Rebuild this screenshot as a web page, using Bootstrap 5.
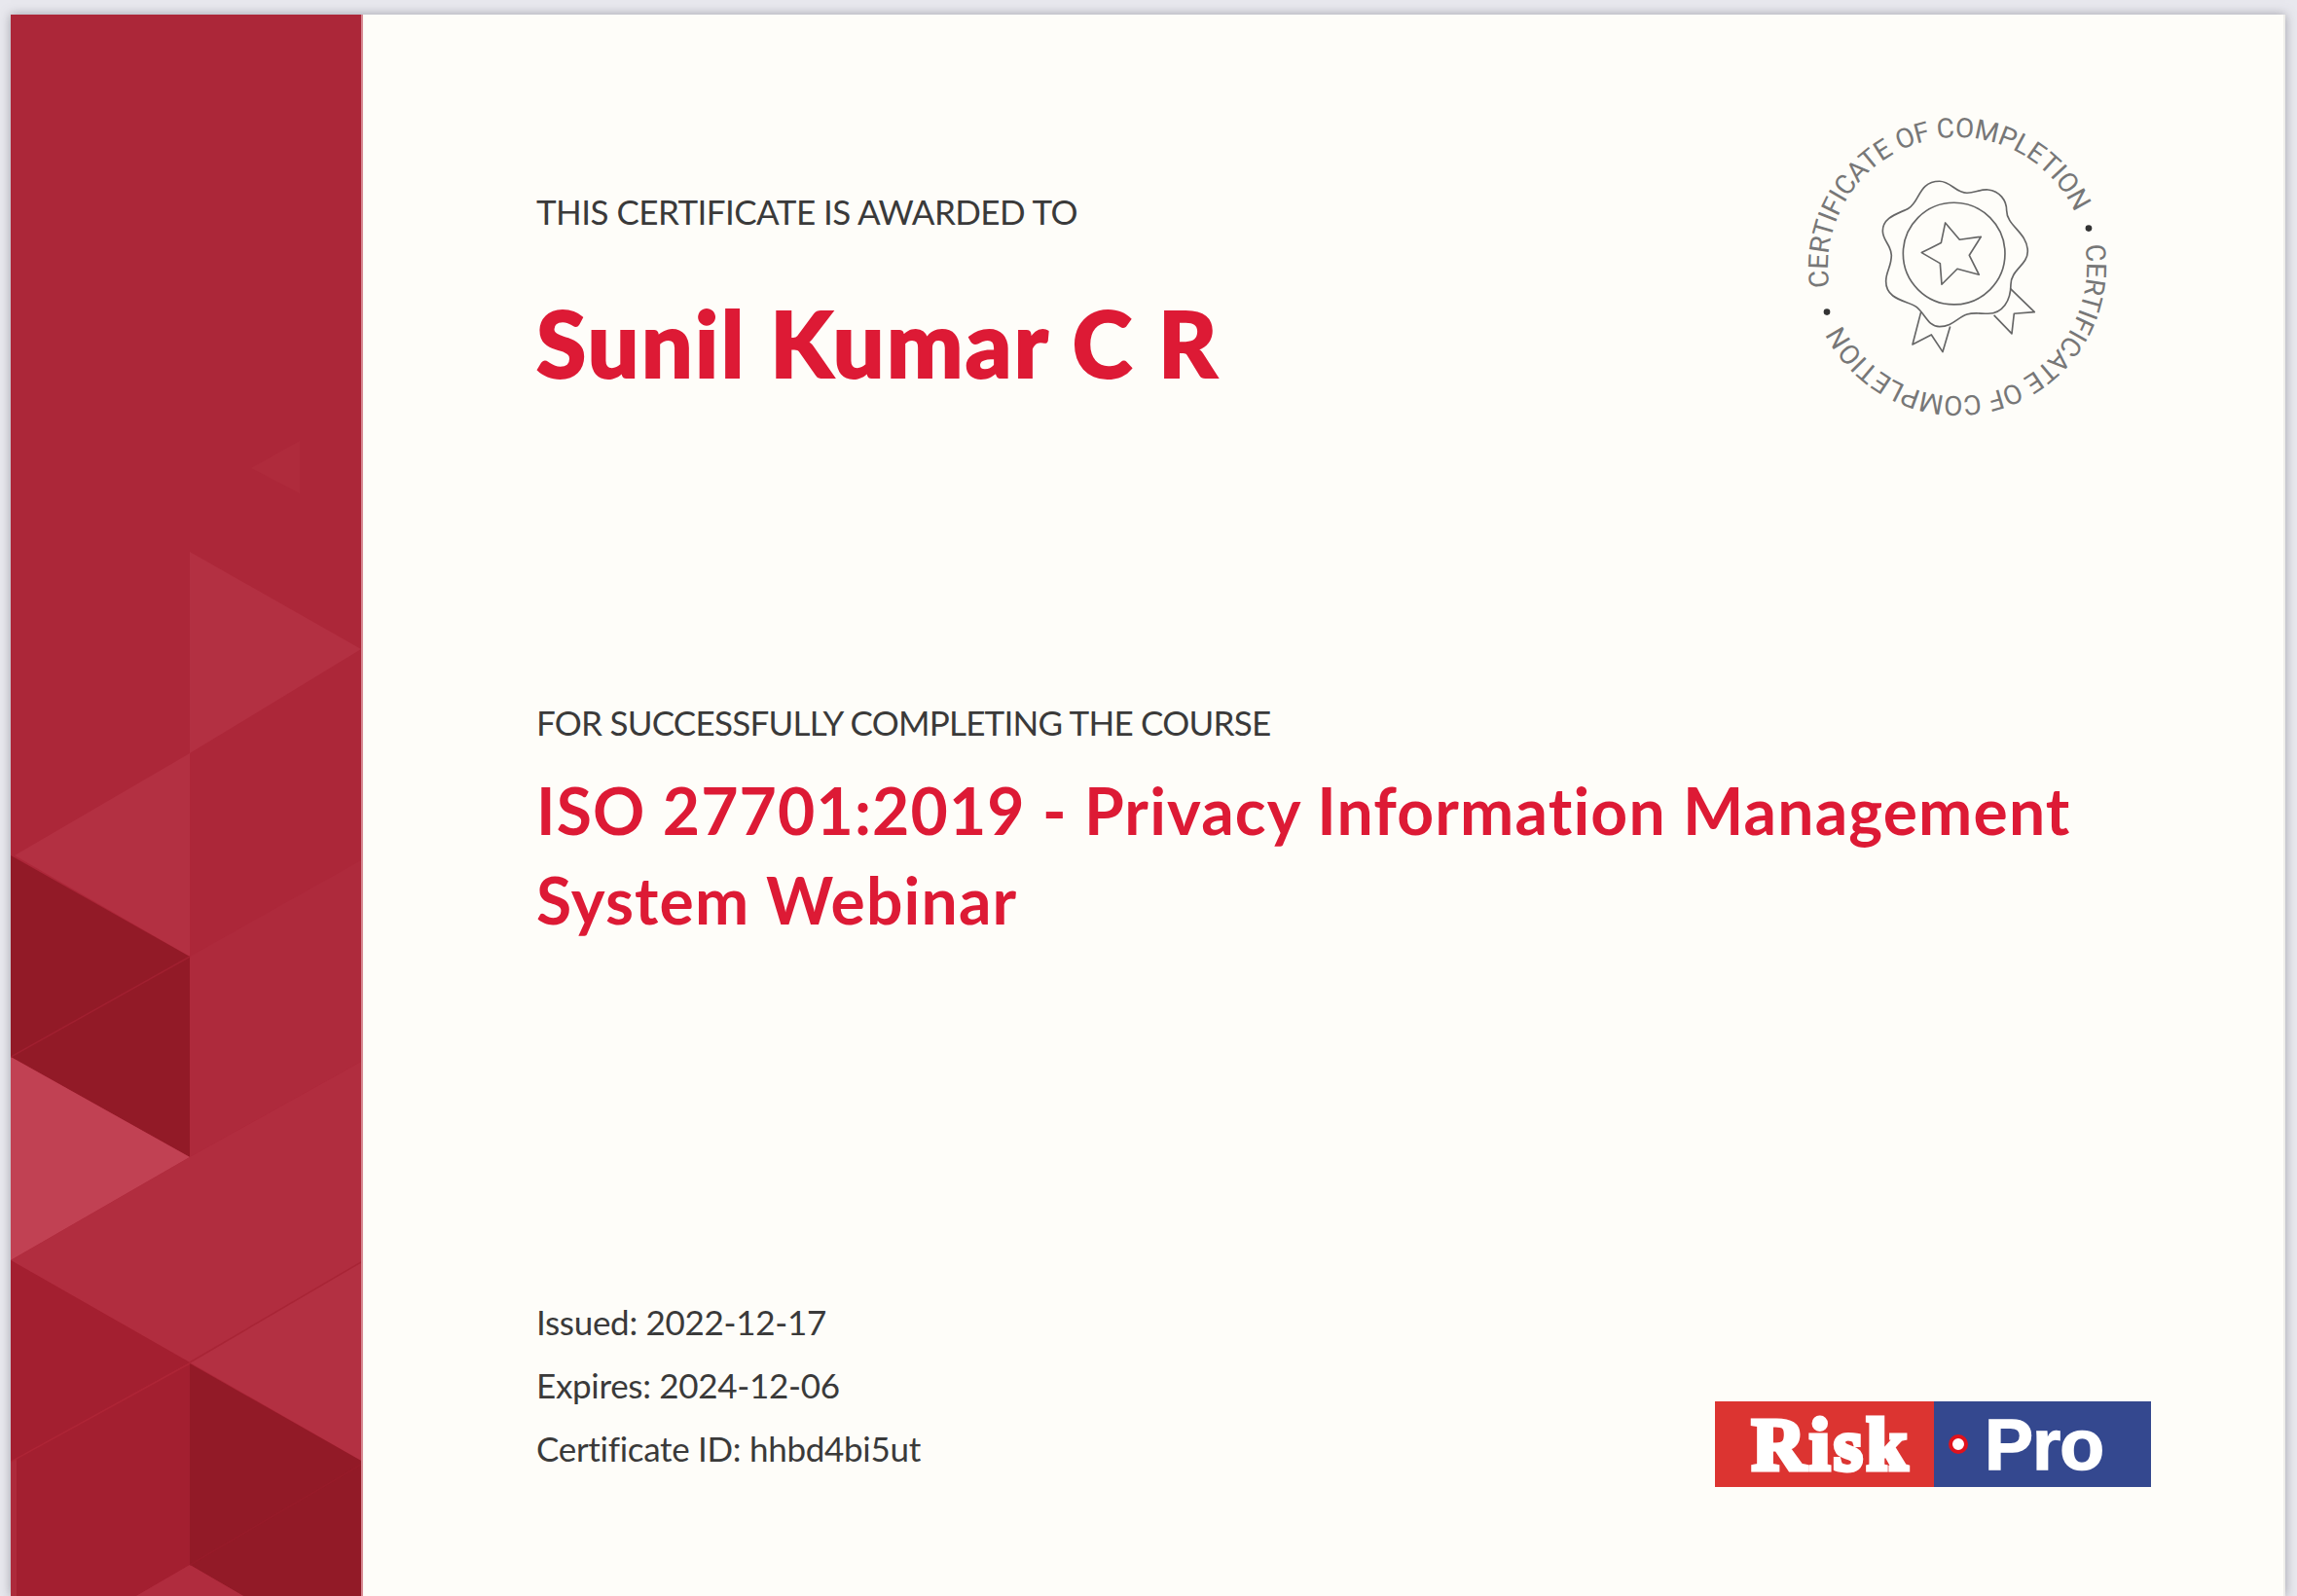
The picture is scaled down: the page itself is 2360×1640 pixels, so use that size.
<!DOCTYPE html>
<html lang="en">
<head>
    <meta charset="UTF-8">
    <meta name="viewport" content="width=device-width, initial-scale=1.0">
    <link href="https://cdn.jsdelivr.net/npm/bootstrap@5.3.0/dist/css/bootstrap.min.css" rel="stylesheet">
    <title>Certificate of Completion</title>
    <style>
        html, body {
            height: 100%;
        }

        body {
            background-color: #e8e8ee;
            overflow: hidden;
            font-family: Lato, "Liberation Sans", sans-serif;
            font-variant-ligatures: none;
            color: #3a3a3a;
        }

        .cert-sheet {
            margin: 15px 12px 0 11px;
            height: 1625px;
            background-color: #fefdf9;
            box-shadow: 0 0 10px rgba(90, 90, 100, .5);
            border-right: 2px solid #efeeea;
        }

        .cert-side {
            width: 362px;
            flex: none;
            border-right: 2px solid #d98d96;
        }

        .cert-side svg {
            display: block;
            width: 100%;
            height: 100%;
        }

        .cert-body {
            padding: 99px 136px 112px 178px;
        }

        .cert-top {
            padding-right: 39px;
        }

        .cert-label {
            font-size: 35px;
            line-height: 50px;
            margin: 0;
            letter-spacing: -.55px;
        }

        .cert-label-course {
            letter-spacing: -.75px;
        }

        .cert-intro {
            padding-top: 78px;
        }

        .cert-name {
            font-size: 93px;
            line-height: 110px;
            font-weight: 900;
            letter-spacing: 2.4px;
            -webkit-text-stroke: 2px #dd1a35;
            color: #dd1a35;
            margin: 55px 0 0;
        }

        .cert-seal {
            width: 320px;
            height: 320px;
            flex: none;
        }

        .cert-seal text {
            font-family: Roboto, sans-serif;
            font-weight: 400;
            font-size: 28px;
            fill: #777;
        }

        .cert-course {
            margin-top: 283px;
        }

        .cert-title {
            font-size: 66px;
            line-height: 92px;
            font-weight: 700;
            letter-spacing: 1.15px;
            color: #dd1a35;
            margin: 20px 0 0;
        }

        .cert-meta {
            font-size: 35px;
            line-height: 65px;
            letter-spacing: -.3px;
            padding-bottom: 7px;
        }

        .risk-logo {
            width: 448px;
            height: 88px;
            flex: none;
        }

        .risk-left {
            width: 225px;
            background-color: #dc3431;
            color: #fff;
            font-family: "Liberation Serif", serif;
            font-weight: 700;
            font-size: 76px;
            line-height: 1;
            letter-spacing: 4px;
            -webkit-text-stroke: 5px #fff;
            padding-left: 38px;
        }

        .risk-right {
            background-color: #34488f;
            color: #fff;
            font-family: "Liberation Sans", sans-serif;
            font-weight: 700;
            font-size: 75px;
            line-height: 1;
            letter-spacing: -1px;
            -webkit-text-stroke: 1.5px #fff;
        }

        .risk-dot {
            width: 20px;
            height: 20px;
            border-radius: 50%;
            background-color: #fff;
            border: 4px solid #e0121c;
            margin: 0 17px 0 15px;
        }
    </style>
</head>
<body>

<div class="cert-sheet d-flex">
    <aside class="cert-side">
        <svg viewBox="11 15 360 1625" preserveAspectRatio="none" xmlns="http://www.w3.org/2000/svg">
            <rect x="11" y="15" width="360" height="1625" fill="#ac2739"/>
            <polygon points="258,481 308,453 308,507" fill="#af2b3c"/>
            <polygon points="195,567 371,667 195,774" fill="#b33042"/>
            <polygon points="15,879 195,774 195,983" fill="#b33042"/>
            <polygon points="195,983 371,884 371,1091 195,1189" fill="#ae2a3c"/>
            <polygon points="11,879 195,983 11,1086" fill="#921a27"/>
            <polygon points="11,1086 195,983 195,1189" fill="#921a27"/>
            <polygon points="11,1086 195,1189 11,1295" fill="#c14153"/>
            <polygon points="11,1295 195,1189 371,1091 371,1297 195,1400" fill="#b12d3f"/>
            <polygon points="195,1400 371,1297 371,1501" fill="#b33042"/>
            <polygon points="11,1295 195,1400 11,1502" fill="#a31f30"/>
            <polygon points="11,1502 195,1401 195,1608 140,1640 11,1640" fill="#a31f30"/>
            <polygon points="195,1401 371,1501 371,1640 250,1640 195,1608" fill="#921a27"/>
            <polygon points="195,1608 250,1640 140,1640" fill="#b02c3e"/>
            <polygon points="11,1502 17,1499 17,1640 11,1640" fill="#ad2a3b"/>
            <g fill="none" stroke-width="1.5">
                <line x1="11" y1="1086" x2="195" y2="983" stroke="#a02030"/>
                <line x1="11" y1="1502" x2="195" y2="1401" stroke="#ad2536"/>
                <line x1="195" y1="1400" x2="371" y2="1297" stroke="#a82536"/>
                <line x1="195" y1="1608" x2="371" y2="1505" stroke="#961b29"/>
            </g>
        </svg>
    </aside>

    <main class="cert-body flex-grow-1 d-flex flex-column">
        <div class="cert-top d-flex justify-content-between align-items-start">
            <div class="cert-intro">
                <p class="cert-label">THIS CERTIFICATE IS AWARDED TO</p>
                <h1 class="cert-name">Sunil Kumar C R</h1>
            </div>
            <svg class="cert-seal" viewBox="0 0 320 320" xmlns="http://www.w3.org/2000/svg">
                <defs>
                    <path id="sealArcA" d="M28.6 180.8A133 133 0 0 1 280.5 103.8"/>
                    <path id="sealArcB" d="M291.2 138A133 133 0 0 1 41.1 219.6"/>
                </defs>
                <text><textPath href="#sealArcA" textLength="381">CERTIFICATE OF COMPLETION</textPath><textPath href="#sealArcB" textLength="378">CERTIFICATE OF COMPLETION</textPath></text>
                <g transform="translate(-30 -21.7) scale(.3333)" fill="none" stroke="#666" stroke-width="5" stroke-linejoin="round">
                    <path d="M515 282C550 282 565 318 600 318C625 318 640 306 665 308C700 312 722 340 722 372C722 420 787 440 787 498C787 540 735 555 735 600C735 650 710 690 665 690C640 690 620 686 600 692C570 702 555 730 515 730C480 730 470 690 445 670C420 650 350 650 350 590C350 560 367 545 367 510C367 480 340 465 340 435C340 390 395 380 420 365C455 345 450 282 515 282Z"/>
                    <circle cx="560" cy="505" r="157"/>
                    <polygon points="533,410 577,462 643,453 607,510 637,570 570,552 522,600 517,535 460,502 520,472"/>
                    <polyline points="458,685 432,785 490,755 525,808 548,730"/>
                    <polyline points="733,612 808,685 745,690 738,752 683,695"/>
                    <circle cx="168" cy="685" r="10" fill="#333" stroke="none"/>
                    <circle cx="975" cy="427" r="10" fill="#333" stroke="none"/>
                </g>
            </svg>
        </div>

        <section class="cert-course">
            <p class="cert-label cert-label-course">FOR SUCCESSFULLY COMPLETING THE COURSE</p>
            <h2 class="cert-title">ISO 27701:2019 - Privacy Information Management System Webinar</h2>
        </section>

        <footer class="d-flex justify-content-between align-items-end mt-auto">
            <div class="cert-meta">
                <div>Issued: 2022-12-17</div>
                <div>Expires: 2024-12-06</div>
                <div>Certificate ID: hhbd4bi5ut</div>
            </div>
            <div class="risk-logo d-flex">
                <div class="risk-left d-flex align-items-center">Risk</div>
                <div class="risk-right flex-grow-1 d-flex align-items-center">
                    <span class="risk-dot"></span>Pro
                </div>
            </div>
        </footer>
    </main>
</div>

<script src="https://cdn.jsdelivr.net/npm/bootstrap@5.3.0/dist/js/bootstrap.bundle.min.js"></script>
</body>
</html>
